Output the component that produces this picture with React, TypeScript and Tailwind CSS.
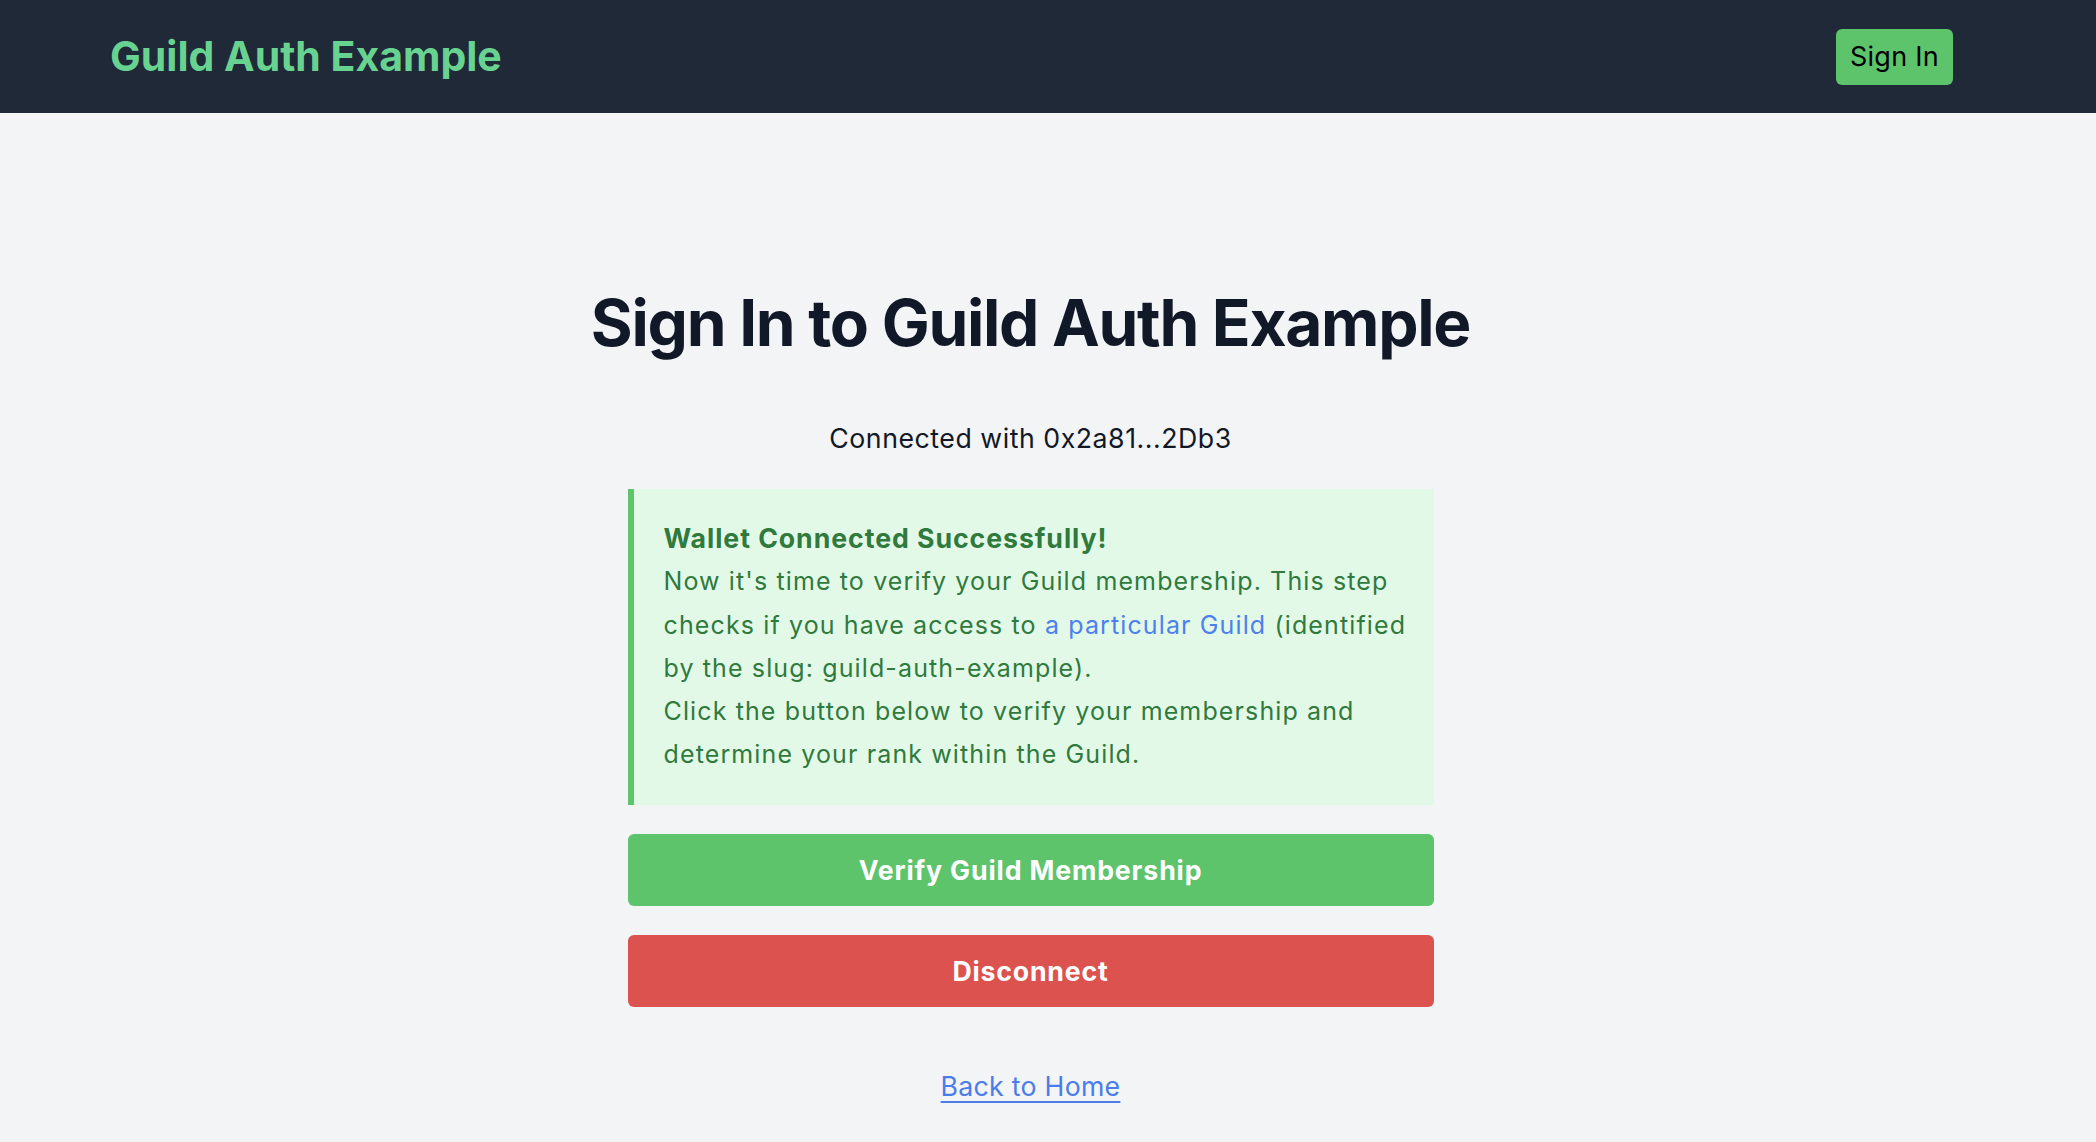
export default function App() {
  return (
    <div className="min-h-screen bg-[#f3f4f6] font-['Inter','Noto_Sans',sans-serif]">
      <header className="flex h-[113px] items-center justify-between bg-[#1f2937] pl-[110px] pr-[143px]">
        <h1 className="text-[41px] font-bold leading-none text-[#68d391]">Guild Auth Example</h1>
        <button className="h-[56px] rounded-[6px] bg-[#5ec46c] px-[14px] text-[27px] leading-none tracking-[0.01em] text-black">
          Sign In
        </button>
      </header>

      <main className="flex flex-col items-center pr-[35px] pt-[178px]">
        <h2 className="text-[64px] font-bold leading-[64px] tracking-[-0.02em] text-[#111827]">
          Sign In to Guild Auth Example
        </h2>
        <p className="mt-[63px] text-[26.7px] leading-[40px] tracking-[0.02em] text-[#111827]">
          Connected with 0x2a81...2Db3
        </p>

        <div className="mt-[31px] w-[806px]">
          <div className="whitespace-nowrap border-l-[6px] border-[#5ec56c] bg-[#e3f9e8] py-[28px] pl-[30px] pr-[20px] text-[25px] leading-[43.3px] tracking-[0.045em] text-[#2f7a3c]">
            <p className="text-[26.7px] font-bold tracking-[0.035em]">Wallet Connected Successfully!</p>
            <p>
              Now it's time to verify your Guild membership. This step
              <br />
              checks if you have access to{" "}
              <a href="#" className="text-[#4d80ee]">
                a particular Guild
              </a>{" "}
              (identified
              <br />
              by the slug: guild-auth-example).
            </p>
            <p>
              Click the button below to verify your membership and
              <br />
              determine your rank within the Guild.
            </p>
          </div>

          <button className="mt-[29px] flex h-[72px] w-full items-center justify-center rounded-[6px] bg-[#5ec46c] text-[26.7px] font-bold tracking-[0.032em] text-white">
            Verify Guild Membership
          </button>
          <button className="mt-[29px] flex h-[72px] w-full items-center justify-center rounded-[6px] bg-[#dc524f] text-[26.7px] font-bold tracking-[0.03em] text-white">
            Disconnect
          </button>
        </div>

        <a href="#" className="mt-[59px] text-[26.7px] leading-[40px] tracking-[0.01em] text-[#4a7de9] underline underline-offset-[5px]">
          Back to Home
        </a>
      </main>
    </div>
  );
}
